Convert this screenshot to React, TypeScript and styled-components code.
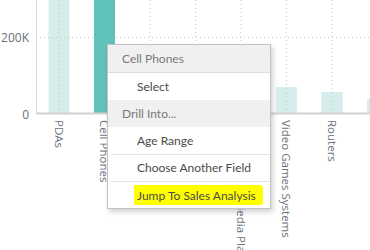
import React from "react";
import styled, { createGlobalStyle } from "styled-components";

const GlobalStyle = createGlobalStyle`
  html, body {
    margin: 0;
    padding: 0;
    background: #fff;
    overflow: hidden;
  }
`;

// chart data: the bars behind the menu are only partly visible
const categories = [
  { name: "PDAs", top: 0, selected: false },
  { name: "Cell Phones", top: 0, selected: true },
  { name: "Cameras", top: 70, selected: false },
  { name: "Camcorders", top: 80, selected: false },
  { name: "Home Theater Media Players", top: 75, selected: false },
  { name: "Video Games Systems", top: 87, selected: false },
  { name: "Routers", top: 92, selected: false },
  { name: "", top: 99, selected: false },
];

const AXIS_Y = 113;
const FIRST_X = 59;
const STEP = 45.5;
const BAR_W = 21;

const Stage = styled.div`
  position: relative;
  width: 370px;
  height: 250px;
  overflow: hidden;
  background: #fff;
`;

const ChartSvg = styled.svg`
  display: block;
  font-family: "Open Sans", "Liberation Sans", sans-serif;
`;

const Menu = styled.div`
  position: absolute;
  left: 107px;
  top: 44px;
  width: 162px;
  border: 1px solid #c3c3c3;
  background: #fff;
  box-shadow: 2px 3px 5px rgba(0, 0, 0, 0.18);
  font-family: "Lato", "Open Sans", sans-serif;
  font-size: 12px;
`;

const MenuHeader = styled.div<{ $line?: boolean }>`
  height: 27px;
  display: flex;
  align-items: center;
  padding-left: 14px;
  background: #f0f0f0;
  color: #7a7a7a;
  border-bottom: ${(p) => (p.$line ? "1px solid #dedede" : "none")};
`;

const MenuItem = styled.div<{ $divider?: boolean }>`
  position: relative;
  height: 27px;
  display: flex;
  align-items: center;
  padding-left: 29px;
  color: #4a4a4a;

  &::before {
    content: "";
    display: ${(p) => (p.$divider ? "block" : "none")};
    position: absolute;
    left: 3px;
    right: 0;
    top: 0;
    border-top: 1px solid #e2e2e2;
  }
`;

const Marker = styled.span`
  background: #ffff00;
  margin-left: -3px;
  padding: 3px 7px 2px 3px;
  border-radius: 1px 3px 2px 1px;
`;

const Chart = () => (
  <ChartSvg width={370} height={250} viewBox="0 0 370 250">
    {/* value axis labels */}
    <text x={29} y={42} textAnchor="end" fontSize={12} fill="#68707a">200K</text>
    <text x={29} y={119} textAnchor="end" fontSize={12} fill="#68707a">0</text>

    {/* light bars */}
    {categories.map((c, i) =>
      c.selected ? null : (
        <rect
          key={"b" + i}
          x={FIRST_X + i * STEP - BAR_W / 2}
          y={c.top}
          width={BAR_W}
          height={AXIS_Y - c.top}
          fill="#d6eeeb"
        />
      )
    )}

    {/* grid */}
    <line x1={36} y1={37.5} x2={370} y2={37.5} stroke="#c4c4c4" strokeDasharray="1 3" />
    {categories.map((c, i) => (
      <line
        key={"g" + i}
        x1={FIRST_X + i * STEP}
        y1={0}
        x2={FIRST_X + i * STEP}
        y2={AXIS_Y}
        stroke="#c4c4c4"
        strokeDasharray="1 3"
      />
    ))}

    {/* selected bar */}
    {categories.map((c, i) =>
      c.selected ? (
        <rect
          key={"s" + i}
          x={FIRST_X + i * STEP - BAR_W / 2}
          y={c.top}
          width={BAR_W}
          height={AXIS_Y - c.top}
          fill="#5fc1b7"
        />
      ) : null
    )}

    {/* axes */}
    <line x1={36.5} y1={0} x2={36.5} y2={AXIS_Y} stroke="#d6d6d6" />
    <line x1={36} y1={AXIS_Y + 0.5} x2={370} y2={AXIS_Y + 0.5} stroke="#d2d2d2" strokeWidth={2} />

    {/* category labels */}
    {categories.map((c, i) => {
      if (!c.name) return null;
      const x = FIRST_X + i * STEP;
      return (
        <text
          key={"l" + i}
          x={x}
          y={120}
          fontSize={11.5}
          fill="#68707a"
          dominantBaseline="central"
          transform={`rotate(90 ${x} 120)`}
        >
          {c.name}
        </text>
      );
    })}
  </ChartSvg>
);

const App = () => {
  return (
    <Stage>
      <GlobalStyle />
      <Chart />
      <Menu>
        <MenuHeader $line>Cell Phones</MenuHeader>
        <MenuItem>Select</MenuItem>
        <MenuHeader>Drill Into...</MenuHeader>
        <MenuItem>Age Range</MenuItem>
        <MenuItem $divider>Choose Another Field</MenuItem>
        <MenuItem $divider>
          <Marker>Jump To Sales Analysis</Marker>
        </MenuItem>
      </Menu>
    </Stage>
  );
};

export default App;
